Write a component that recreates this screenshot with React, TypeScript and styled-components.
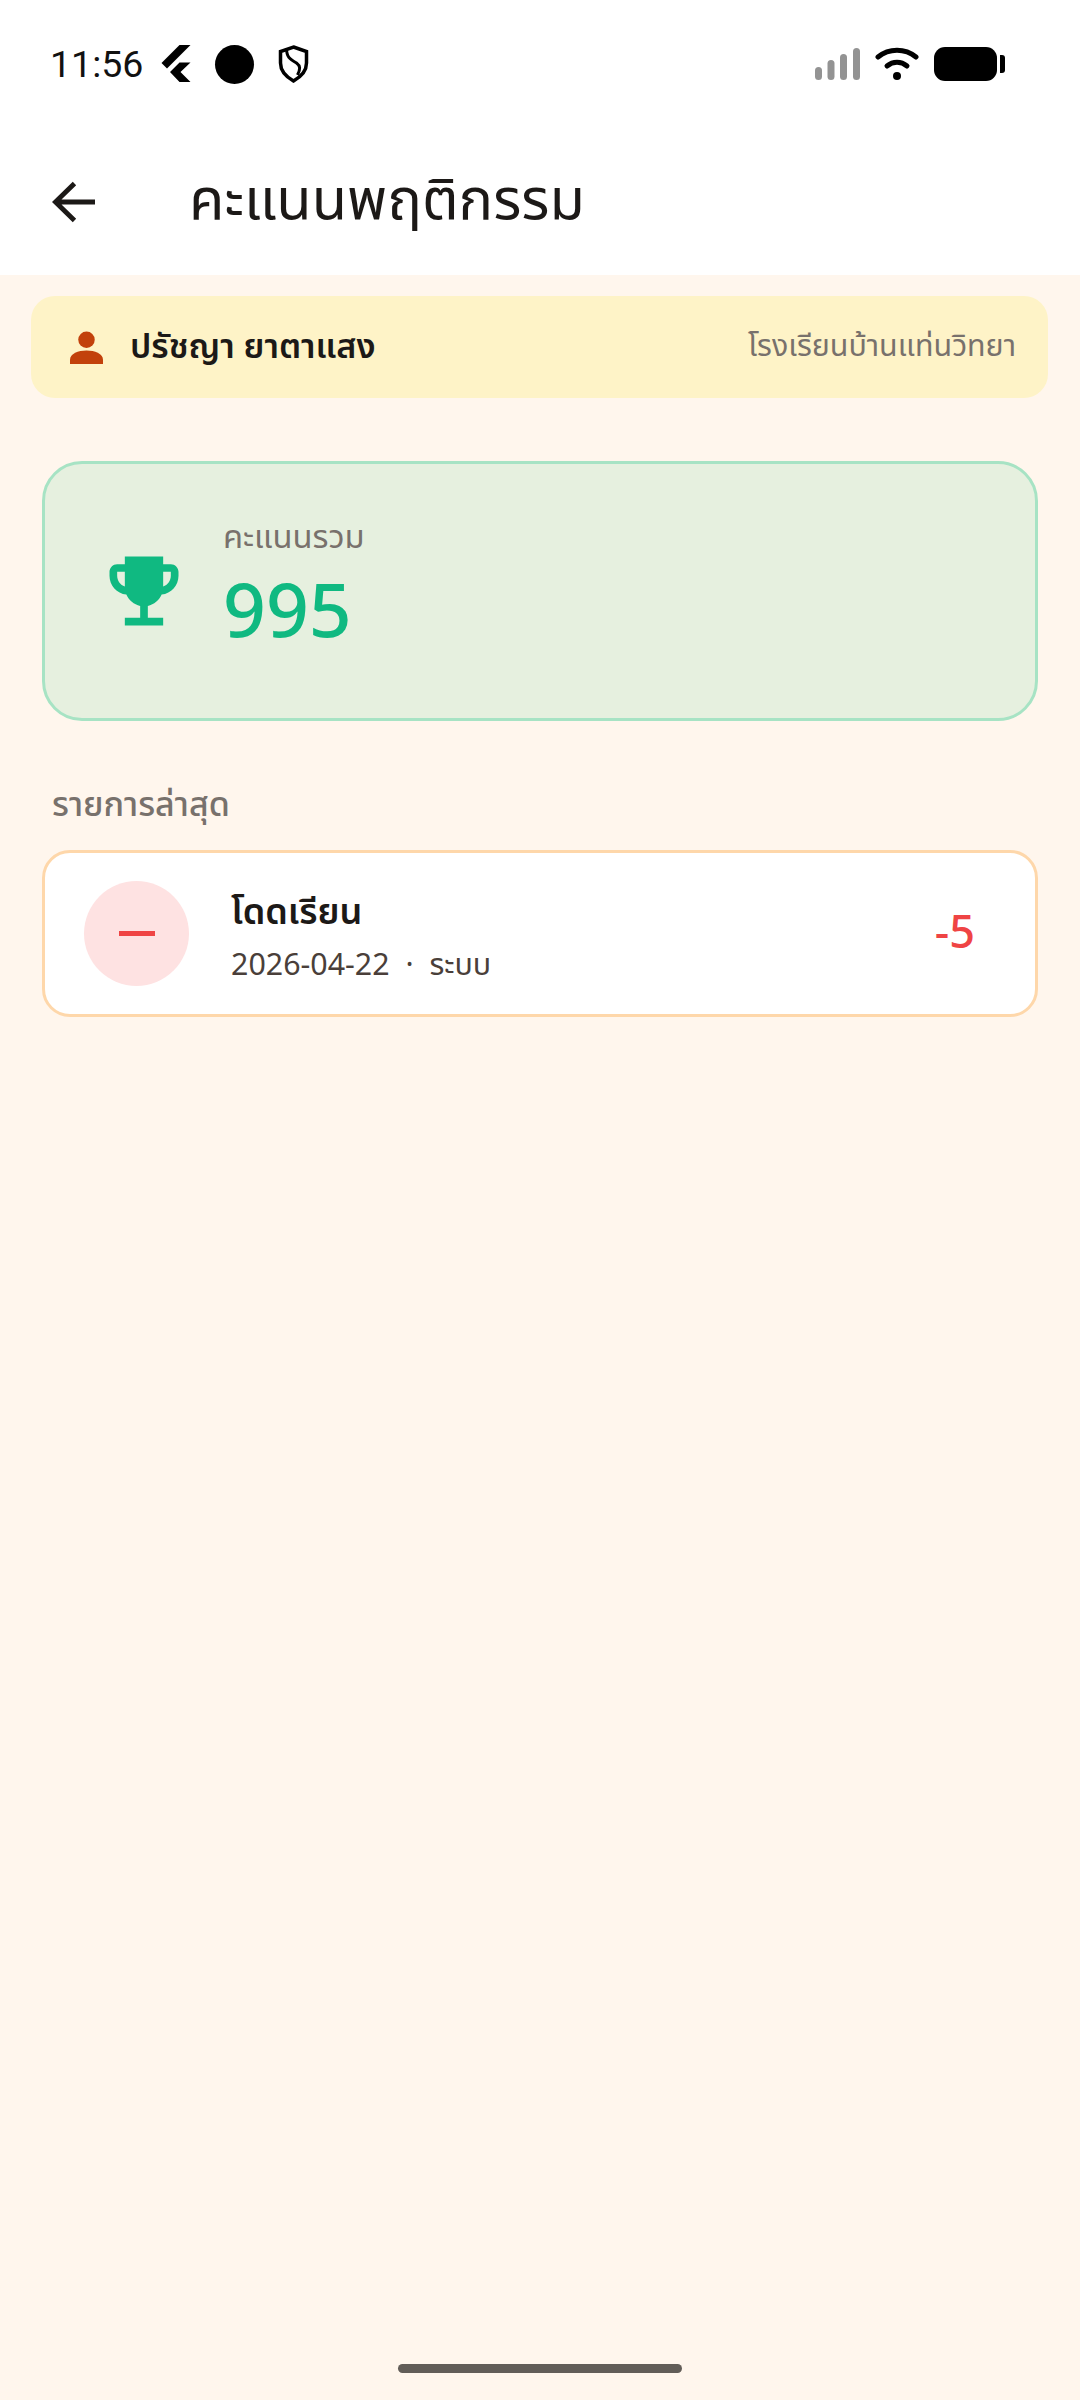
import React from "react";
import styled, { createGlobalStyle } from "styled-components";

const GlobalStyle = createGlobalStyle`
  html, body {
    margin: 0;
    padding: 0;
    background: #fff6ed;
  }
  * {
    box-sizing: border-box;
  }
`;

const thaiFont = `"Noto Sans Thai", "Noto Sans", "Open Sans", sans-serif`;

const Screen = styled.div`
  position: relative;
  width: 1080px;
  height: 2400px;
  background: #fff6ed;
  font-family: ${thaiFont};
  overflow: hidden;
`;

const Header = styled.header`
  height: 275px;
  background: #ffffff;
`;

const StatusBar = styled.div`
  height: 128px;
  padding: 0 75px 0 50px;
  display: flex;
  align-items: center;
  justify-content: space-between;
`;

const StatusLeft = styled.div`
  display: flex;
  align-items: center;
`;

const StatusRight = styled.div`
  display: flex;
  align-items: center;
  gap: 15px;
`;

const Clock = styled.span`
  font-family: Roboto, sans-serif;
  font-size: 37.500px;
  color: #111111;
  margin-right: 17px;
`;

const CameraDot = styled.span`
  width: 39px;
  height: 39px;
  margin: 0 23px 0 22px;
  border-radius: 50%;
  background: #000000;
`;

const AppBar = styled.div`
  height: 147px;
  padding: 0 0 0 52px;
  display: flex;
  align-items: center;
`;

const BackButton = styled.svg`
  width: 43px;
  height: 42px;
  margin-right: 94px;
`;

const Title = styled.h1`
  margin: 0;
  font-size: 57.700px;
  font-weight: 400;
  color: #1c1917;
`;

const Banner = styled.div`
  margin: 21px 32px 0 31px;
  height: 102px;
  padding: 0 32px 0 39px;
  background: #fef3c7;
  border-radius: 24px;
  display: flex;
  align-items: center;
`;

const StudentName = styled.span`
  margin-left: 27px;
  flex: 1;
  font-size: 34.200px;
  font-weight: 600;
  color: #1c1917;
`;

const SchoolName = styled.span`
  font-size: 30.400px;
  color: #78716c;
`;

const SummaryCard = styled.section`
  margin: 63px 42px 0;
  height: 260px;
  padding: 0 0 0 53px;
  display: flex;
  align-items: center;
  gap: 33px;
  background: #e6f0df;
  border: 3px solid #a7e3c4;
  border-radius: 40px;
`;

const SummaryText = styled.div`
  padding-bottom: 8px;
`;

const SummaryLabel = styled.div`
  font-size: 32.700px;
  line-height: 44px;
  color: #78716c;
`;

const SummaryValue = styled.div`
  margin-top: 10px;
  font-size: 75px;
  font-weight: 500;
  line-height: 88px;
  color: #10b981;
`;

const SectionTitle = styled.h2`
  margin: 62px 0 0 52px;
  font-size: 34px;
  line-height: 46px;
  font-weight: 500;
  color: #78716c;
`;

const RecordCard = styled.div`
  margin: 21px 42px 0;
  height: 167px;
  padding: 0 60px 0 39px;
  display: flex;
  align-items: center;
  background: #ffffff;
  border: 3px solid #fed7aa;
  border-radius: 28px;
`;

const RecordBadge = styled.div<{ $tint: string }>`
  width: 105px;
  height: 105px;
  flex: none;
  border-radius: 50%;
  background: ${(p) => p.$tint};
  display: flex;
  align-items: center;
  justify-content: center;
`;

const MinusMark = styled.span<{ $color: string }>`
  width: 36px;
  height: 5px;
  background: ${(p) => p.$color};
`;

const RecordBody = styled.div`
  flex: 1;
  margin-left: 42px;
  padding-top: 11px;
`;

const RecordTitle = styled.div`
  font-size: 36px;
  line-height: 46px;
  font-weight: 600;
  color: #1c1917;
`;

const RecordMeta = styled.div`
  margin-top: 8px;
  font-size: 30.400px;
  line-height: 44px;
  color: #4a3f3a;
`;

const RecordPoints = styled.span<{ $color: string }>`
  font-size: 45px;
  font-weight: 500;
  color: ${(p) => p.$color};
`;

const HomeIndicator = styled.div`
  position: absolute;
  left: 398px;
  bottom: 27px;
  width: 284px;
  height: 9px;
  border-radius: 5px;
  background: #625d58;
`;

const FlutterIcon = () => (
  <svg width="33" height="38" viewBox="0 0 32 38">
    <path d="M30 0H19L1 18l5.500 5.500z" fill="#000" />
    <path d="M30 17.500H19l-9.500 9.500L19 37h11l-10-10z" fill="#000" />
  </svg>
);

const ShieldIcon = () => (
  <svg width="33" height="38" viewBox="0 0 32 38" fill="none" stroke="#000" strokeWidth="3.500">
    <path d="M16 2l13 4.500V18c0 8-6 14-13 18C9 32 3 26 3 18V6.500z" />
    <path d="M9 3c0 9 3 11 10 15 4 3 4 6 1 12" strokeWidth="3" />
  </svg>
);

const SignalIcon = () => (
  <svg width="45" height="32" viewBox="0 0 45 32" fill="#939393">
    <rect x="0" y="19" width="7" height="13" rx="3.500" />
    <rect x="12.500" y="12" width="7" height="20" rx="3.500" />
    <rect x="25" y="6" width="7" height="26" rx="3.500" />
    <rect x="38" y="0" width="7" height="32" rx="3.500" />
  </svg>
);

const WifiIcon = () => (
  <svg width="44" height="34" viewBox="0 0 44 34" fill="none" stroke="#000" strokeWidth="5" strokeLinecap="round">
    <path d="M3 10c11-9 27-9 38 0" />
    <path d="M12 19c6-5 14-5 20 0" />
    <circle cx="22" cy="29" r="4" fill="#000" stroke="none" />
  </svg>
);

const BatteryIcon = () => (
  <svg width="71" height="34" viewBox="0 0 71 34" fill="#000">
    <rect x="0" y="0" width="63" height="34" rx="11" />
    <path d="M66 8h2a3 3 0 0 1 3 3v12a3 3 0 0 1-3 3h-2z" />
  </svg>
);

const PersonIcon = () => (
  <svg width="33" height="33" viewBox="0 0 32 32" fill="#c2410c">
    <circle cx="16" cy="8.500" r="8" />
    <path d="M0 32v-4c0-6 8-9 16-9s16 3 16 9v4z" />
  </svg>
);

const TrophyIcon = () => (
  <svg width="92" height="92" viewBox="0 0 24 24" fill="#10b981">
    <path d="M19 5h-2V3H7v2H5c-1.100 0-2 .9-2 2v1c0 2.550 1.920 4.630 4.390 4.940.63 1.500 1.980 2.630 3.610 2.960V19H7v2h10v-2h-4v-3.100c1.630-.33 2.980-1.460 3.610-2.960C19.080 12.630 21 10.550 21 8V7c0-1.100-.9-2-2-2zM5 8V7h2v3.820C5.840 10.400 5 9.300 5 8zm14 0c0 1.300-.84 2.400-2 2.820V7h2v1z" />
  </svg>
);

export default function App() {
  return (
    <Screen>
      <GlobalStyle />
      <Header>
        <StatusBar>
          <StatusLeft>
            <Clock>11:56</Clock>
            <FlutterIcon />
            <CameraDot />
            <ShieldIcon />
          </StatusLeft>
          <StatusRight>
            <SignalIcon />
            <WifiIcon />
            <BatteryIcon />
          </StatusRight>
        </StatusBar>
        <AppBar>
          <BackButton viewBox="0 0 44 42" fill="none" stroke="#1c1917" strokeWidth="5">
            <path d="M44 21H4M23 2L3.500 21 23 40" />
          </BackButton>
          <Title>คะแนนพฤติกรรม</Title>
        </AppBar>
      </Header>

      <Banner>
        <PersonIcon />
        <StudentName>ปรัชญา ยาตาแสง</StudentName>
        <SchoolName>โรงเรียนบ้านแท่นวิทยา</SchoolName>
      </Banner>

      <SummaryCard>
        <TrophyIcon />
        <SummaryText>
          <SummaryLabel>คะแนนรวม</SummaryLabel>
          <SummaryValue>995</SummaryValue>
        </SummaryText>
      </SummaryCard>

      <SectionTitle>รายการล่าสุด</SectionTitle>

      <RecordCard>
        <RecordBadge $tint="#fee2e2">
          <MinusMark $color="#ef4444" />
        </RecordBadge>
        <RecordBody>
          <RecordTitle>โดดเรียน</RecordTitle>
          <RecordMeta>2026-04-22 &nbsp;·&nbsp; ระบบ</RecordMeta>
        </RecordBody>
        <RecordPoints $color="#ef4444">-5</RecordPoints>
      </RecordCard>

      <HomeIndicator />
    </Screen>
  );
}
